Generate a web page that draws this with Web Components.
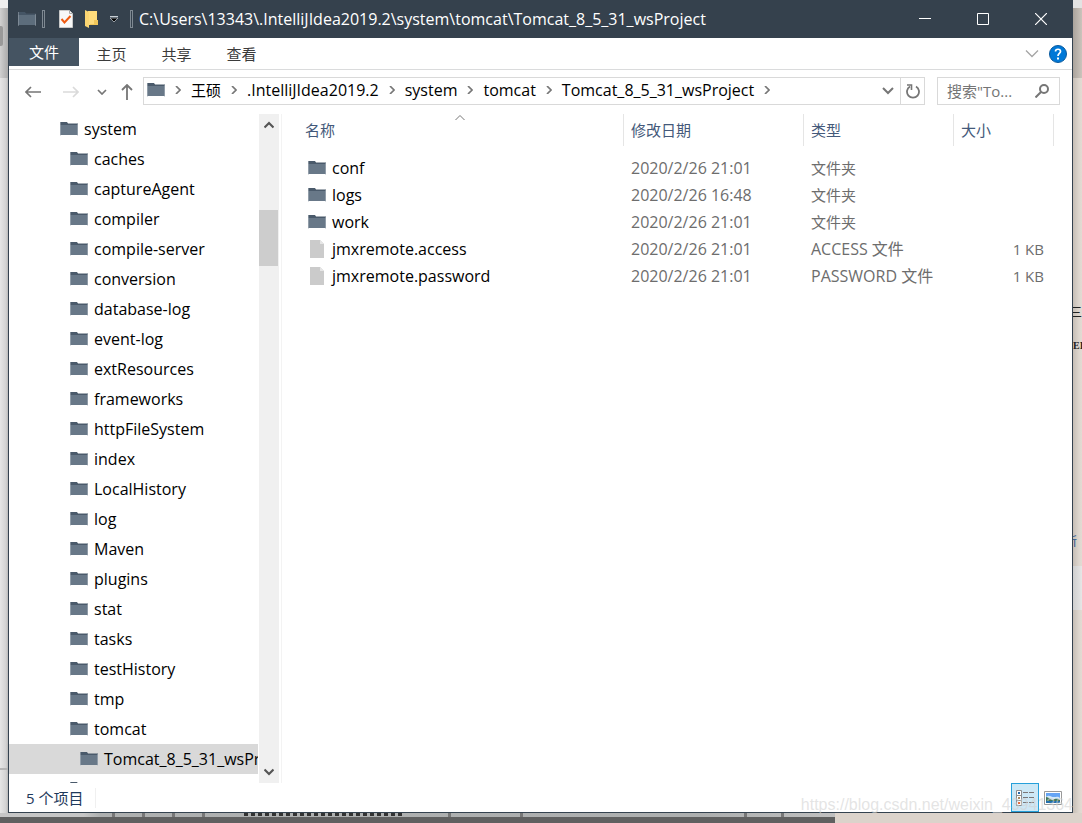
<!DOCTYPE html>
<html lang="zh-CN">
<head>
<meta charset="utf-8">
<title>Tomcat_8_5_31_wsProject</title>
<style>
  html, body { margin: 0; height: 100%; }
  body { font: 15px/20px "Open Sans", "Noto Sans CJK SC", sans-serif; color: #000; background: #e0d9d1; }
</style>
</head>
<body>
<desk-scene>
  <explorer-window>
    <title-bar slot="title" path="C:\Users\13343\.IntelliJIdea2019.2\system\tomcat\Tomcat_8_5_31_wsProject"></title-bar>
    <ribbon-tabs slot="ribbon"></ribbon-tabs>
    <address-row slot="address"></address-row>
    <folder-tree slot="tree"></folder-tree>
    <file-list slot="files"></file-list>
    <status-bar slot="status">5 个项目</status-bar>
  </explorer-window>
</desk-scene>
<script>
const define = (name, html, setup) => {
  const template = document.createElement('template');
  template.innerHTML = `<style>*{box-sizing:border-box} button,input{font:inherit;color:inherit;background:none;border:0;padding:0;margin:0} a{color:inherit;text-decoration:none}</style>` + html;
  customElements.define(name, class extends HTMLElement {
    constructor() {
      super();
      this.attachShadow({ mode: 'open' }).append(template.content.cloneNode(true));
    }
    connectedCallback() { if (setup) setup(this, this.shadowRoot); }
  });
};

const icons = {
  folder: [18, 14, '<path d="M0 1h7l1 1h10v11H0z" fill="#687888"/><path d="M0 0h7l1 1.500h10V3H0z" fill="#4a5a6b"/><path d="M0 0v14M18 2v12" stroke="#b9c1c9"/>'],
  file: [14, 18, '<path d="M0 0h10l4 4v14H0z" fill="#cbcbcb"/><path d="M10 0v4h4z" fill="#e6e6e6"/>'],
  check: [14, 18, '<path d="M.5.500h10l3 3v14H.500z" fill="#f8f8f8" stroke="#c9c9c9"/><path d="M10.500.500v3h3" fill="none" stroke="#aaa"/><path d="M2.500 9l3 3.500 6-6.500" fill="none" stroke="#ee5a12" stroke-width="2"/>'],
  yellow: [13, 18, '<path d="M3 1h9v14H3z" fill="#ffdc7c"/><path d="M0 0l4 2v16l-4-2z" fill="#fbd572"/><path d="M9 10h4v5H5v-1h4z" fill="#f2c75a"/>'],
  menu: [8, 8, '<path d="M0 1.500h8" stroke="#c8ced4"/><path d="M0 3h8L4 7z" fill="#000" stroke="#c8ced4" stroke-width=".7"/>'],
  min: [12, 12, '<path d="M0 5.500h12" stroke="#fff"/>'],
  max: [12, 12, '<path d="M.5.500h11v11H.500z" fill="none" stroke="#fff"/>'],
  close: [12, 12, '<path d="M0 0l12 12M12 0L0 12" stroke="#fff" stroke-width="1.200"/>'],
  expand: [14, 8, '<path d="M1 .500l6 6 6-6" fill="none" stroke="#a5a5a5" stroke-width="1.300"/>'],
  help: [18, 18, '<circle cx="9" cy="9" r="8.500" fill="#0078d7" stroke="#0a5a9e"/><path d="M6.500 6.500c0-3 5-3 5 0 0 2-2.500 2-2.500 4.500" fill="none" stroke="#fff" stroke-width="1.700"/><path d="M8 12.500h2v2H8z" fill="#fff"/>'],
  back: [16, 12, '<path d="M6 1L1 6l5 5M1 6h15" fill="none" stroke="#767676" stroke-width="1.700"/>'],
  forward: [16, 12, '<path d="M10 1l5 5-5 5M15 6H0" fill="none" stroke="#dadada" stroke-width="1.700"/>'],
  recent: [10, 6, '<path d="M1 1l4 4 4-4" fill="none" stroke="#767676" stroke-width="1.700"/>'],
  up: [12, 16, '<path d="M1 6l5-5 5 5M6 1v15" fill="none" stroke="#767676" stroke-width="1.800"/>'],
  crumb: [6, 8, '<path d="M1 0l4 4-4 4" fill="none" stroke="#777" stroke-width="1.700"/>'],
  down: [12, 8, '<path d="M1 1l5 5 5-5" fill="none" stroke="#767676" stroke-width="2"/>'],
  refresh: [14, 16, '<path d="M4 3.500A6 6 0 1 0 10 3.500" fill="none" stroke="#767676" stroke-width="1.800"/><path d="M1 2h4.500v5" fill="none" stroke="#767676" stroke-width="1.600"/>'],
  search: [14, 14, '<circle cx="9" cy="5" r="4" fill="none" stroke="#767676" stroke-width="2"/><path d="M6 8l-5.500 5.500" stroke="#767676" stroke-width="2"/>'],
  sup: [10, 8, '<path d="M.5 6.500L5 2l4.500 4.500" fill="none" stroke="#555" stroke-width="2.200"/>'],
  sdown: [10, 8, '<path d="M.5 1.500L5 6l4.500-4.500" fill="none" stroke="#555" stroke-width="2.200"/>'],
  sort: [10, 5, '<path d="M.5 5L5 .500 9.500 5" fill="none" stroke="#777"/>'],
  details: [18, 16, '<path d="M.5.500h5v15h-5zM.5 5.500h5M.5 10.500h5" fill="#fff" stroke="#8f8f8f"/><path d="M7 2.500h5m1 0h5M7 7.500h5m1 0h5M7 12.500h5m1 0h5" stroke="#7b7777"/><path d="M2 2h2v2H2z" fill="#2869a8"/><path d="M2 7h2v2H2z" fill="#aa8b5e"/><path d="M2 12h2v2H2z" fill="#e6693d"/>'],
  thumbs: [18, 14, '<path d="M.5.500h17v13H.500z" fill="#fff" stroke="#999"/><path d="M2 2h14v10H2z" fill="#65a4f4"/><path d="M2 6c3-3 5 0 8 0s4-1 6 1v2H2z" fill="#d5e9f7"/><path d="M2 6c3 0 4 3 7 3 3-2 5-1 7 0v1H2z" fill="#467653"/><path d="M2 10h14v2H2z" fill="#236fae"/>']
};
customElements.define('ui-icon', class extends HTMLElement {
  connectedCallback() {
    if (this.shadowRoot) return;
    const [w, h, art] = icons[this.getAttribute('name')];
    this.attachShadow({ mode: 'open' }).innerHTML =
      `<style>:host{display:block;flex:none}svg{display:block}</style><svg width="${w}" height="${h}" viewBox="0 0 ${w} ${h}" aria-hidden="true">${art}</svg>`;
  }
});

/* Desktop: the strips of other windows that show round the explorer */
define('desk-scene', `
<style>
  :host { display: grid; grid-template-columns: 8px minmax(0,1fr) 9px; grid-template-rows: minmax(0,1fr) 10px; min-height: 100vh; }
  .left, .right { display: flex; flex-direction: column; overflow: hidden; }
  .left { background: linear-gradient(90deg,#e6e6e6,#d2d2d2 6px,#b8b8b8); }
  .left i { display: block; flex: none; }
  .l1 { height: 8px; background: #efefef; }
  .l2 { height: 70px; background: linear-gradient(90deg,#d0d0d0,#aaa); padding-top: 18px; }
  .l2 b { display: block; width: 3px; height: 20px; background: #999; border-radius: 0 2px 2px 0; }
  .l3 { margin-top: 690px; height: 2px; background: #b5b5b5; }
  .right { background: linear-gradient(90deg,#c6beb6,#ddd6ce 6px,#e2dbd3); font: 12px/16px "Liberation Serif","Noto Sans CJK SC",serif; color: #222; }
  .r1 { flex: none; height: 8px; background: #e3e3e3; }
  .r2 { flex: none; height: 70px; background: linear-gradient(90deg,#aaa39c,#cbc4bc); }
  .r3 { flex: 488 0 0; }
  .r4 { flex: 44 0 0; background: linear-gradient(90deg,#cfcfcf,#e6e6e6); }
  .r5 { flex: 203 0 0; }
  .r3 span { display: block; white-space: nowrap; }
  .a { padding-top: 227px; margin-left: -3px; } .b { padding-top: 17px; font-weight: 700; font-size: 10px; }
  .c { padding-top: 180px; margin-left: -8px; color: #24508a; }
  .bottom { grid-column: 1 / -1; display: grid; grid-template-columns: 835fr 247fr; background: #dcd3cb; }
  .under { background: #606060; }
  .ruler { height: 4px; background: linear-gradient(90deg,#c6c6c6 10%,#aeb0b0 12%,#adafaf 84%,#c0c0c0); display: flex; padding-left: 112px; }
  .ticks { width: 100px; background: repeating-linear-gradient(90deg,#777 0 3px,transparent 3px 30px); }
  .dots { width: 158px; margin-left: 32px; background: repeating-linear-gradient(90deg,#333 0 4px,transparent 4px 7px); height: 3px; }
  .more { width: 80px; margin-left: 46px; background: repeating-linear-gradient(90deg,#777 0 3px,transparent 3px 72px); }
  .last { width: 50px; margin-left: 216px; background: repeating-linear-gradient(90deg,#777 0 3px,transparent 3px 37px); }
</style>
<div class="left"><i class="l1"></i><i class="l2"><b></b></i><i class="l3"></i></div>
<slot></slot>
<div class="right"><div class="r1"></div><div class="r2"></div><div class="r3"><span class="a">三</span><span class="b">EI</span><span class="c">所</span></div><div class="r4"></div><div class="r5"></div></div>
<div class="bottom"><div class="under"><div class="ruler"><div class="ticks"></div><div class="dots"></div><div class="more"></div><div class="last"></div></div></div></div>`);

define('explorer-window', `
<style>
  :host { display: grid; grid-template-rows: 38px 32px 44px minmax(0,1fr) 29px; border: solid #34424f; border-width: 0 1px 1px; background: #fff; position: relative; min-width: 0; }
  main { display: grid; grid-template-columns: 273px minmax(0,1fr); min-height: 0; }
  .mark { position: absolute; right: -1px; bottom: -3px; font: 16px/20px "Liberation Sans",sans-serif; color: rgba(210,210,210,.6); pointer-events: none; }
</style>
<slot name="title"></slot><slot name="ribbon"></slot><slot name="address"></slot>
<main><slot name="tree"></slot><slot name="files"></slot></main>
<slot name="status"></slot><span class="mark">https://blog.csdn.net/weixin_43941364</span>`);

define('title-bar', `
<style>
  :host { display: flex; align-items: center; background: #35414d; color: #fff; padding: 0 2px 0 9px; font-size: 16px; }
  .sep { width: 3px; height: 18px; border: 1px solid #7f8992; flex: none; }
  .tools { display: flex; align-items: center; }
  .tools button { display: flex; }
  .path { flex: 1; white-space: nowrap; overflow: hidden; padding-left: 6px; }
  .win { display: grid; grid-template-columns: repeat(3, 58px); align-self: stretch; }
  .win button { display: grid; place-items: center; }
  .dim { opacity: .8; }
  .s1 { margin: 0 14px 0 6px; } .s2 { margin-left: 12px; } .g { margin-left: 12px; }
</style>
<div class="tools"><ui-icon class="dim" name="folder"></ui-icon><span class="sep s1"></span>
<button aria-label="属性"><ui-icon name="check"></ui-icon></button><button class="g" aria-label="新建文件夹"><ui-icon name="yellow"></ui-icon></button>
<button class="g" aria-label="自定义"><ui-icon name="menu"></ui-icon></button><span class="sep s2"></span></div>
<span class="path"></span>
<div class="win"><button aria-label="最小化"><ui-icon name="min"></ui-icon></button><button aria-label="最大化"><ui-icon name="max"></ui-icon></button><button aria-label="关闭"><ui-icon name="close"></ui-icon></button></div>`,
(el, root) => { root.querySelector('.path').textContent = el.getAttribute('path'); });

define('ribbon-tabs', `
<style>
  :host { display: flex; border-bottom: 1px solid #dadbdc; color: #3b3b3b; }
  .tab { width: 65px; height: 31px; }
  .file { width: 70px; height: 28px; background: #455462; color: #fff; }
  .end { margin-left: auto; display: flex; align-items: center; gap: 10px; padding-right: 5px; }
  .end button { display: block; }
</style>
<button class="tab file">文件</button><button class="tab">主页</button><button class="tab">共享</button><button class="tab">查看</button>
<div class="end"><button aria-label="展开功能区"><ui-icon name="expand"></ui-icon></button><button aria-label="帮助"><ui-icon name="help"></ui-icon></button></div>`);

define('address-row', `
<style>
  :host { display: flex; align-items: flex-start; padding: 7px 12px 0 16px; }
  .nav { display: flex; align-items: center; height: 30px; width: 118px; flex: none; }
  .nav button, .box button { display: grid; place-items: center; }
  .fwd { margin-left: 22px; } .rec { margin-left: 18px; } .upb { margin-left: 14px; }
  .box { display: flex; align-items: center; height: 28px; border: 1px solid #d9d9d9; min-width: 0; }
  .addr { flex: 1; padding-left: 3px; }
  .crumbs { display: flex; align-items: center; flex: 1; overflow: hidden; white-space: nowrap; margin: 0; padding: 0 0 2px; list-style: none; }
  .crumbs li { display: flex; align-items: center; font-size: 16px; }
  .crumbs li:lang(zh) { font-size: 15px; }
  .crumbs li ui-icon { margin: 0 10px; }
  .first ui-icon:first-child { margin: 0 !important; }
  .ref { width: 24px; align-self: stretch; border-left: 1px solid #d9d9d9; }
  .drop { width: 24px; }
  .search { width: 123px; margin-left: 12px; padding: 0 10px 0 9px; flex: none; }
  input { width: 100%; min-width: 0; flex: 1; outline: 0; }
  input::placeholder { color: #757575; opacity: 1; }
</style>
<div class="nav"><button aria-label="后退"><ui-icon name="back"></ui-icon></button><button class="fwd" aria-label="前进"><ui-icon name="forward"></ui-icon></button><button class="rec" aria-label="最近"><ui-icon name="recent"></ui-icon></button><button class="upb" aria-label="向上"><ui-icon name="up"></ui-icon></button></div>
<div class="box addr"><ul class="crumbs"><li class="first"><ui-icon name="folder"></ui-icon><ui-icon name="crumb"></ui-icon></li></ul>
<button class="drop" aria-label="历史"><ui-icon name="down"></ui-icon></button><button class="ref" aria-label="刷新"><ui-icon name="refresh"></ui-icon></button></div>
<div class="box search"><input aria-label="搜索" placeholder='搜索"To...'><button aria-label="开始搜索"><ui-icon name="search"></ui-icon></button></div>`,
(el, root) => {
  root.querySelector('.crumbs').insertAdjacentHTML('beforeend', ['王硕', '.IntelliJIdea2019.2', 'system', 'tomcat', 'Tomcat_8_5_31_wsProject']
    .map((t, i) => `<li lang="${i ? 'en' : 'zh'}"><a href="#">${t}</a><ui-icon name="crumb"></ui-icon></li>`).join(''));
});

define('folder-tree', `
<style>
  :host { display: grid; grid-template-columns: minmax(0,1fr) 20px; padding-right: 2px; border-right: 1px solid #f3f3f3; min-height: 0; font-size: 16px; }
  nav { overflow: hidden; height: 0; min-height: 100%; padding-right: 1px; }
  ul { margin: 0; padding: 0; list-style: none; }
  a { display: flex; align-items: center; gap: 6px; height: 30px; padding-left: 61px; white-space: nowrap; overflow: hidden; }
  li:first-child a { padding-left: 51px; }
  a[aria-current] { padding-left: 71px; background: #d9d9d9; }
  .bar { background: #f0f0f0; display: grid; grid-template-rows: 22px 74fr 56fr 496fr 22px; }
  .bar button { display: grid; place-items: center; }
  .thumb { grid-row: 3; background: #cdcdcd; margin-right: 1px; }
  .dn { grid-row: 5; }
</style>
<nav aria-label="文件夹"><ul></ul></nav>
<div class="bar"><button aria-label="向上滚动"><ui-icon name="sup"></ui-icon></button><div class="thumb"></div><button class="dn" aria-label="向下滚动"><ui-icon name="sdown"></ui-icon></button></div>`,
(el, root) => {
  const names = ['system','caches','captureAgent','compiler','compile-server','conversion','database-log','event-log','extResources','frameworks','httpFileSystem','index','LocalHistory','log','Maven','plugins','stat','tasks','testHistory','tmp','tomcat','Tomcat_8_5_31_wsProject',''];
  root.querySelector('ul').innerHTML = names.map(n => `<li><a href="#"${n.startsWith('Tomcat_') ? ' aria-current="true"' : ''}><ui-icon name="folder"></ui-icon>${n}</a></li>`).join('');
});

define('file-list', `
<style>
  :host { display: block; padding: 0 18px 0 15px; }
  table { width: 100%; table-layout: fixed; border-collapse: separate; border-spacing: 0; color: #6d6d6d; }
  .date { width: 180px; } .type { width: 150px; } .size { width: 100px; }
  th, td { text-align: left; font-weight: 400; padding: 0 7px; white-space: nowrap; }
  th { height: 32px; color: #44597a; border-right: 1px solid #e5e5e5; position: relative; }
  th:first-child { padding-left: 8px; }
  th ui-icon { position: absolute; top: 1px; left: calc(50% - 5px); }
  tbody::before { content: ""; display: block; height: 8px; }
  td { height: 27px; }
  td:first-child { padding-left: 11px; color: #000; font-size: 16px; }
  .num, .mixed { font-size: 16px; }
  td:last-child { text-align: right; padding-right: 10px; }
  .name { display: flex; align-items: center; gap: 6px; }
  .pic { width: 18px; display: grid; place-items: center; }
</style>
<table><colgroup><col><col class="date"><col class="type"><col class="size"></colgroup>
<thead><tr><th>名称<ui-icon name="sort"></ui-icon></th><th>修改日期</th><th>类型</th><th>大小</th></tr></thead><tbody></tbody></table>`,
(el, root) => {
  root.querySelector('tbody').innerHTML = [
    ['conf','21:01','文件夹',''], ['logs','16:48','文件夹',''], ['work','21:01','文件夹',''],
    ['jmxremote.access','21:01','ACCESS 文件','1 KB'], ['jmxremote.password','21:01','PASSWORD 文件','1 KB']
  ].map(([n, t, k, s]) => `<tr><td><a class="name" href="#"><span class="pic"><ui-icon name="${s ? 'file' : 'folder'}"></ui-icon></span>${n}</a></td><td class="num">2020/2/26 ${t}</td><td class="${s ? 'mixed' : ''}">${k}</td><td>${s}</td></tr>`).join('');
});

define('status-bar', `
<style>
  :host { display: flex; align-items: center; padding: 0 5px 0 17px; color: #1e395b; }
  .count { padding-right: 12px; border-right: 1px solid #f0f0f0; }
  .views { margin-left: auto; display: flex; }
  button { width: 28px; height: 29px; display: grid; place-items: center; }
  button[aria-pressed=true] { border: 1px solid #26a0da; background: #cce8f6; }
</style>
<span class="count"><slot></slot></span>
<div class="views"><button aria-pressed="true" aria-label="详细信息"><ui-icon name="details"></ui-icon></button><button aria-pressed="false" aria-label="缩略图"><ui-icon name="thumbs"></ui-icon></button></div>`);
</script>
</body>
</html>
